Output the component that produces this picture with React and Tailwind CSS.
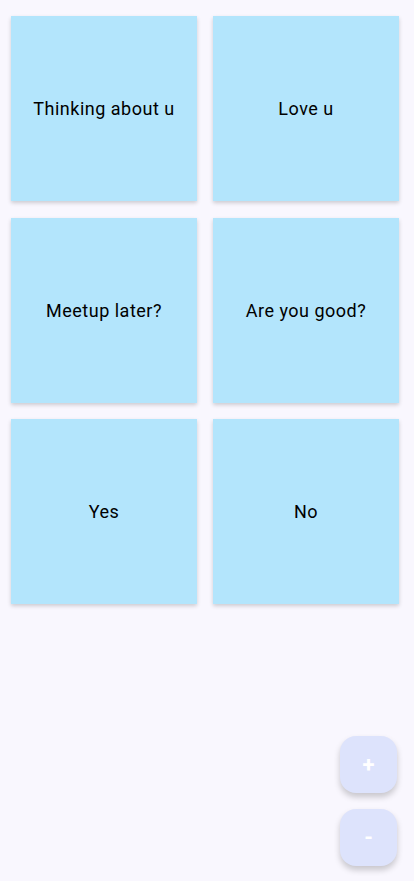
const notes = ['Thinking about u', 'Love u', 'Meetup later?', 'Are you good?', 'Yes', 'No']

export default function App() {
    return (
        <div className="relative h-[881px] w-[414px] overflow-hidden bg-[#f9f7fe]" style={{ fontFamily: 'Roboto, "Noto Sans", sans-serif' }}>

            {/* Notes grid */}
            <div className="grid grid-cols-[186px_186px] gap-x-4 gap-y-[16.5px] pl-[11px] pt-4">
                {notes.map(note => (
                    <div
                        key={note}
                        className="flex h-[185px] items-center justify-center bg-[#b3e5fc] text-[18px] tracking-[0.5px] text-black shadow-[0_2px_4px_rgba(0,0,0,0.18)]"
                    >
                        {note}
                    </div>
                ))}
            </div>

            {/* Zoom buttons */}
            <div className="absolute right-[17px] top-[736px] flex flex-col gap-4">
                <button className="flex h-[57px] w-[57px] items-center justify-center rounded-2xl bg-[#dde3fc] text-[22px] font-bold text-white shadow-[0_4px_6px_rgba(0,0,0,0.2)]">
                    +
                </button>
                <button className="flex h-[57px] w-[57px] items-center justify-center rounded-2xl bg-[#dde3fc] text-[22px] font-bold text-white shadow-[0_4px_6px_rgba(0,0,0,0.2)]">
                    -
                </button>
            </div>
        </div>
    )
}
